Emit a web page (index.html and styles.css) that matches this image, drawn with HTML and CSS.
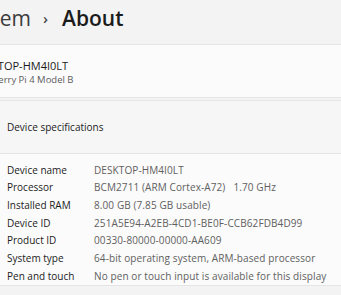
FILE: index.html
```html
<!DOCTYPE html>
<html lang="en">
  <head>
    <meta charset="UTF-8" />
    <title>About</title>
    <link rel="stylesheet" href="styles.css">
  </head>
  <body>
    <div class="page">
      <div class="title">
        <span class="crumb">System</span>
        <span class="chev">&#8250;</span>
        <span class="current">About</span>
      </div>
      <div class="card pc">
        <div class="pc-text">
          <div class="pc-name">DESKTOP-HM4I0LT</div>
          <div class="pc-model">Raspberry Pi 4 Model B</div>
        </div>
      </div>
      <div class="card specs">
        <div class="specs-head">Device specifications</div>
        <div class="specs-body">
          <div class="row"><span class="label">Device name</span><span class="value">DESKTOP-HM4I0LT</span></div>
          <div class="row"><span class="label">Processor</span><span class="value">BCM2711 (ARM Cortex-A72) &nbsp; 1.70 GHz</span></div>
          <div class="row"><span class="label">Installed RAM</span><span class="value">8.00 GB (7.85 GB usable)</span></div>
          <div class="row"><span class="label">Device ID</span><span class="value">251A5E94-A2EB-4CD1-BE0F-CCB62FDB4D99</span></div>
          <div class="row"><span class="label">Product ID</span><span class="value">00330-80000-00000-AA609</span></div>
          <div class="row"><span class="label">System type</span><span class="value">64-bit operating system, ARM-based processor</span></div>
          <div class="row"><span class="label">Pen and touch</span><span class="value">No pen or touch input is available for this display</span></div>
        </div>
      </div>
    </div>
  </body>
</html>
```

FILE: styles.css
```css
html {
  font-family: "Open Sans", sans-serif;
}
body {
  margin: 0;
  padding: 0;
  background: #f3f3f3;
  color: #1b1b1b;
  overflow: hidden;
}
.page {
  width: 400px;
  margin-left: -14px;
}
.title {
  height: 36px;
  padding-bottom: 8px;
  display: flex;
  align-items: center;
  font-size: 21px;
  font-weight: 600;
  margin-left: 14px;
}
.crumb {
  width: 31px;
  overflow: hidden;
  white-space: nowrap;
  direction: rtl;
  text-align: right;
  color: #3c3c3c;
  font-weight: 500;
}
.chev {
  margin-left: 12px;
  color: #4a4a4a;
  font-size: 15px;
}
.current {
  margin-left: 14px;
  color: #1b1b1b;
}
.card {
  border: 1px solid #e5e5e5;
  border-radius: 4px;
  background: #fbfbfb;
  margin-bottom: 2px;
}
.pc {
  height: 52px;
  display: flex;
  align-items: center;
}
.pc-text {
  margin-left: -16px;
  padding-top: 3px;
}
.pc-name {
  font-size: 11px;
  line-height: 14px;
}
.pc-model {
  font-size: 9.5px;
  color: #5c5c5c;
  line-height: 14px;
}
.specs-head {
  height: 52px;
  display: flex;
  align-items: center;
  padding-left: 20px;
  font-size: 10px;
  background: #f6f6f6;
  border-bottom: 1px solid #e5e5e5;
}
.specs-body {
  padding: 7px 0 0 20px;
  font-size: 10px;
}
.row {
  display: flex;
  height: 17.67px;
  align-items: center;
}
.label {
  width: 87px;
  color: #1b1b1b;
}
.value {
  color: #606060;
  letter-spacing: 0.1px;
}
```
